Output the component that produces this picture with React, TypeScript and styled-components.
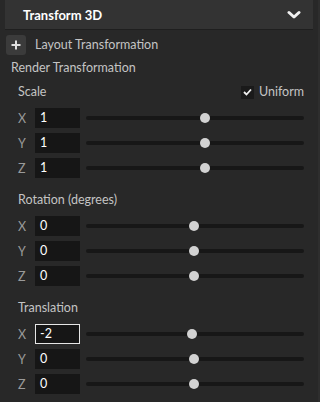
import styled, { createGlobalStyle } from "styled-components";

const GlobalStyle = createGlobalStyle`
  body {
    margin: 0;
    background: #282828;
    font-family: Lato, "Open Sans", sans-serif;
  }
`;

const Panel = styled.div`
  width: 320px;
  height: 402px;
  background: #282828;
  overflow: hidden;
  box-sizing: border-box;
  border-right: 2px solid #2e2e2e;
`;

const Header = styled.div`
  margin: 0 5px;
  height: 30px;
  box-sizing: border-box;
  background: #333333;
  border-bottom: 1px solid #1f1f1f;
  display: flex;
  align-items: center;
  justify-content: space-between;
  padding: 0 12px 0 18px;
`;

const HeaderTitle = styled.span`
  color: #ffffff;
  font-size: 13px;
  font-weight: 700;
`;

const LayoutRow = styled.div`
  display: flex;
  align-items: center;
  gap: 9px;
  margin-top: 5px;
  padding-left: 6px;
  height: 20px;
`;

const PlusButton = styled.div`
  width: 20px;
  height: 20px;
  border-radius: 3px;
  background: #3b3b3b;
  display: flex;
  align-items: center;
  justify-content: center;
`;

const Label = styled.span`
  color: #c4c4c4;
  font-size: 12.5px;
  line-height: 16px;
`;

const GroupTitle = styled.div`
  color: #c4c4c4;
  font-size: 12.5px;
  line-height: 16px;
  margin-top: 5px;
  padding-left: 11px;
`;

const Section = styled.div`
  padding: 0 14px 0 18px;
  margin-top: 8px;

  & + & {
    margin-top: 14px;
  }
`;

const SectionHead = styled.div`
  display: flex;
  align-items: center;
  justify-content: space-between;
  height: 16px;
  margin-bottom: 8px;
`;

const Uniform = styled.div`
  display: flex;
  align-items: center;
  gap: 5px;
`;

const Check = styled.div`
  width: 13px;
  height: 13px;
  background: #1a1a1a;
  display: flex;
  align-items: center;
  justify-content: center;
`;

const Rows = styled.div`
  display: flex;
  flex-direction: column;
  gap: 5px;
`;

const Row = styled.div`
  display: flex;
  align-items: center;
  height: 20px;
`;

const Axis = styled.span`
  width: 17px;
  color: #9a9a9a;
  font-size: 12.5px;
`;

const ValueBox = styled.div<{ $focused?: boolean }>`
  width: 45px;
  height: 20px;
  box-sizing: border-box;
  background: #161616;
  color: #ffffff;
  font-size: 12.5px;
  line-height: ${(p) => (p.$focused ? "18px" : "20px")};
  padding-left: ${(p) => (p.$focused ? "4px" : "5px")};
  border: ${(p) => (p.$focused ? "1px solid #e6e6e6" : "none")};
`;

const Track = styled.div`
  position: relative;
  flex: 1;
  margin-left: 6px;
  height: 4px;
  border-radius: 2px;
  background: #171717;
`;

const Thumb = styled.div`
  position: absolute;
  top: -3px;
  width: 10px;
  height: 10px;
  border-radius: 50%;
  background: #d2d2d2;
`;

type Axis3 = { axis: string; value: string; pos: number; focused?: boolean };

const Chevron = () => (
  <svg width="14" height="10" viewBox="0 0 14 10">
    <path d="M2 2.5 L7 7 L12 2.5" stroke="#f0f0f0" strokeWidth="3" fill="none" strokeLinecap="round" strokeLinejoin="round" />
  </svg>
);

const Plus = () => (
  <svg width="10" height="10" viewBox="0 0 10 10">
    <path d="M5 0.5 V9.5 M0.5 5 H9.5" stroke="#e0e0e0" strokeWidth="2" />
  </svg>
);

const Tick = () => (
  <svg width="9" height="8" viewBox="0 0 9 8">
    <path d="M1 4 L3.5 6.5 L8 1.5" stroke="#f0f0f0" strokeWidth="1.8" fill="none" />
  </svg>
);

const VectorRows = ({ items }: { items: Axis3[] }) => (
  <Rows>
    {items.map((it) => (
      <Row key={it.axis}>
        <Axis>{it.axis}</Axis>
        <ValueBox $focused={it.focused}>{it.value}</ValueBox>
        <Track>
          <Thumb style={{ left: `${it.pos}px` }} />
        </Track>
      </Row>
    ))}
  </Rows>
);

const scale: Axis3[] = [
  { axis: "X", value: "1", pos: 114 },
  { axis: "Y", value: "1", pos: 114 },
  { axis: "Z", value: "1", pos: 114 },
];

const rotation: Axis3[] = [
  { axis: "X", value: "0", pos: 103 },
  { axis: "Y", value: "0", pos: 103 },
  { axis: "Z", value: "0", pos: 103 },
];

const translation: Axis3[] = [
  { axis: "X", value: "-2", pos: 101, focused: true },
  { axis: "Y", value: "0", pos: 103 },
  { axis: "Z", value: "0", pos: 103 },
];

export default function App() {
  return (
    <>
      <GlobalStyle />
      <Panel>
        <Header>
          <HeaderTitle>Transform 3D</HeaderTitle>
          <Chevron />
        </Header>

        <LayoutRow>
          <PlusButton>
            <Plus />
          </PlusButton>
          <Label>Layout Transformation</Label>
        </LayoutRow>

        <GroupTitle>Render Transformation</GroupTitle>

        <Section>
          <SectionHead>
            <Label>Scale</Label>
            <Uniform>
              <Check>
                <Tick />
              </Check>
              <Label>Uniform</Label>
            </Uniform>
          </SectionHead>
          <VectorRows items={scale} />
        </Section>

        <Section>
          <SectionHead>
            <Label>Rotation (degrees)</Label>
          </SectionHead>
          <VectorRows items={rotation} />
        </Section>

        <Section>
          <SectionHead>
            <Label>Translation</Label>
          </SectionHead>
          <VectorRows items={translation} />
        </Section>
      </Panel>
    </>
  );
}
